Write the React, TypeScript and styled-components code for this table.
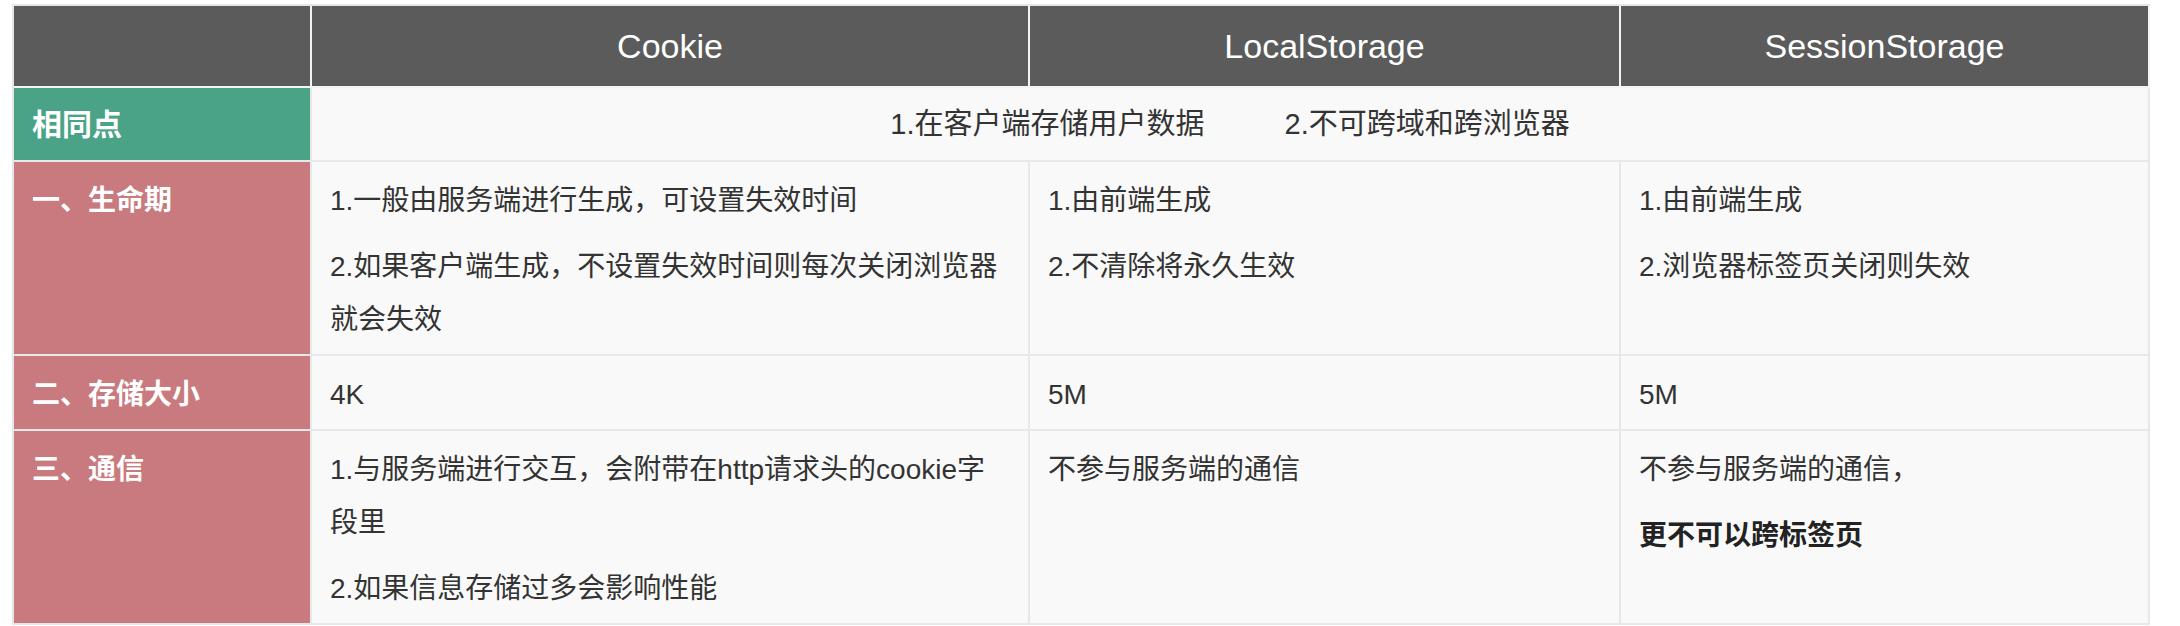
import React from "react";
import styled, { createGlobalStyle } from "styled-components";

const Global = createGlobalStyle`
  html, body { margin: 0; padding: 0; background: #ffffff; }
  body {
    font-family: "Liberation Sans", "Noto Sans CJK SC", sans-serif;
    color: #333333;
  }
  * { box-sizing: border-box; }
`;

const Page = styled.div`
  padding: 4px 30px 0 12px;
`;

const Grid = styled.div`
  display: grid;
  grid-template-columns: 298px 718px 591px 529px;
  width: 2138px;
  border-top: 2px solid #e6e6e6;
  border-left: 2px solid #e6e6e6;
`;

const HeadCell = styled.div`
  background: #5a5b5a;
  color: #ffffff;
  font-size: 34px;
  line-height: 40px;
  padding: 20px 18px;
  text-align: center;
  border-right: 2px solid #f3f3f3;
  border-bottom: 2px solid #f3f3f3;
  &:last-child { border-right-color: #e6e6e6; }
`;

const Label = styled.div<{ $tone: "green" | "pink" }>`
  background: ${(p) => (p.$tone === "green" ? "#4aa386" : "#c97a7e")};
  color: #ffffff;
  font-weight: 700;
  font-size: ${(p) => (p.$tone === "green" ? "30px" : "28px")};
  line-height: 53px;
  padding: ${(p) => (p.$tone === "green" ? "10px 18px 9px" : "12px 18px 8px")};
  border-right: 2px solid #e8e8e8;
  border-bottom: 2px solid #e8e8e8;
`;

const Cell = styled.div`
  background: #f9f9f9;
  font-size: 28px;
  padding: 12px 18px 8px;
  border-right: 2px solid #e8e8e8;
  border-bottom: 2px solid #e8e8e8;
`;

const SharedCell = styled.div`
  grid-column: 2 / 5;
  background: #f9f9f9;
  font-size: 29px;
  line-height: 53px;
  padding: 10px 18px 9px;
  display: flex;
  justify-content: center;
  gap: 80px;
  border-right: 2px solid #e8e8e8;
  border-bottom: 2px solid #e8e8e8;
`;

const Para = styled.p`
  margin: 0;
  line-height: 53px;
  & + & { margin-top: 13px; }
`;

const Strong = styled.strong`
  font-weight: 700;
  color: #222222;
`;

type Row = { label: string; cells: React.ReactNode[][] };

const rows: Row[] = [
  {
    label: "一、生命期",
    cells: [
      ["1.一般由服务端进行生成，可设置失效时间", "2.如果客户端生成，不设置失效时间则每次关闭浏览器就会失效"],
      ["1.由前端生成", "2.不清除将永久生效"],
      ["1.由前端生成", "2.浏览器标签页关闭则失效"],
    ],
  },
  {
    label: "二、存储大小",
    cells: [["4K"], ["5M"], ["5M"]],
  },
  {
    label: "三、通信",
    cells: [
      ["1.与服务端进行交互，会附带在http请求头的cookie字段里", "2.如果信息存储过多会影响性能"],
      ["不参与服务端的通信"],
      ["不参与服务端的通信，", <Strong key="s">更不可以跨标签页</Strong>],
    ],
  },
];

export default function App() {
  return (
    <Page>
      <Global />
      <Grid>
        <HeadCell />
        <HeadCell>Cookie</HeadCell>
        <HeadCell>LocalStorage</HeadCell>
        <HeadCell>SessionStorage</HeadCell>

        <Label $tone="green">相同点</Label>
        <SharedCell>
          <span>1.在客户端存储用户数据</span>
          <span>2.不可跨域和跨浏览器</span>
        </SharedCell>

        {rows.map((r) => (
          <React.Fragment key={r.label}>
            <Label $tone="pink">{r.label}</Label>
            {r.cells.map((c, i) => (
              <Cell key={i}>
                {c.map((t, j) => (
                  <Para key={j}>{t}</Para>
                ))}
              </Cell>
            ))}
          </React.Fragment>
        ))}
      </Grid>
    </Page>
  );
}
